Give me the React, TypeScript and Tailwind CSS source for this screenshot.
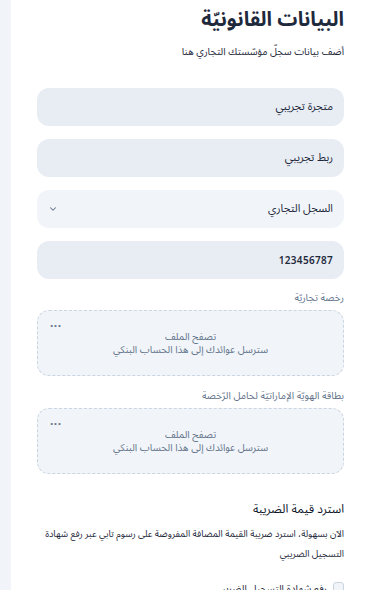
import { ChevronDown } from "lucide-react";

function TextField({ value, mono }: { value: string; mono?: boolean }) {
  return (
    <div className="flex h-[38px] items-center rounded-xl bg-[#e8edf4] px-[11px]">
      <span
        className={
          mono
            ? "font-['Noto_Sans',sans-serif] text-[10px] font-semibold tracking-[0.3px] text-[#1e293b]"
            : "text-[11px] text-[#1e293b]"
        }>
        {value}
      </span>
    </div>
  );
}

function DropZone({ label }: { label: string }) {
  return (
    <div className="flex flex-col gap-[5px]">
      <span className="text-[10px] leading-[14px] text-[#64748b]">{label}</span>
      <div className="relative flex h-[66px] flex-col items-center justify-center rounded-xl border border-dashed border-[#cbd5e1] bg-[#f1f5f9] text-[10px] leading-[13.5px] text-[#64748b]">
        <span className="absolute left-[12px] top-[6px] font-['Noto_Sans',sans-serif] text-[12px] font-bold leading-none tracking-[0.5px] text-[#64748b]">
          ...
        </span>
        <span>تصفح الملف</span>
        <span>سترسل عوائدك إلى هذا الحساب البنكي</span>
      </div>
    </div>
  );
}

export default function App() {
  return (
    <div className="flex min-h-[590px] w-full bg-white font-['Noto_Sans_Arabic','DejaVu_Sans',sans-serif]">
      <div className="w-[11px] shrink-0 bg-[#f1f5f9]" />
      <div dir="rtl" className="flex flex-1 flex-col pl-[26px] pr-[24px] pt-[4px]">
        <h1 className="text-[20px] font-bold leading-[32px] text-[#1e293b]">
          البيانات القانونيّة
        </h1>
        <p className="mt-[8px] text-[10px] leading-[16px] text-[#1e293b]">
          أضف بيانات سجلّ مؤسّستك التجاري هنا
        </p>

        <div className="mt-[28px] flex flex-col gap-[13px]">
          <TextField value="متجرة تجريبي" />
          <TextField value="ربط تجريبي" />
          <div className="flex h-[38px] items-center justify-between rounded-xl bg-[#f1f5f9] px-[11px]">
            <span className="text-[11px] text-[#1e293b]">السجل التجاري</span>
            <ChevronDown className="h-[10px] w-[10px] text-[#64748b]" strokeWidth={2.5} />
          </div>
          <TextField value="123456787" mono />
        </div>

        <div className="mt-[12px] flex flex-col gap-[13px]">
          <DropZone label="رخصة تجاريّة" />
          <DropZone label="بطاقة الهويّة الإماراتيّة لحامل الرّخصة" />
        </div>

        <h2 className="mt-[27px] text-[12px] font-normal leading-[18px] text-[#0f172a]">
          استرد قيمة الضريبة
        </h2>
        <p className="mt-[5px] text-[9.3px] leading-[20px] text-[#1e293b]">
          الآن بسهولة، استرد ضريبة القيمة المضافة المفروضة على رسوم تابي عبر رفع شهادة التسجيل الضريبي
        </p>

        <label className="mt-[18px] flex items-start gap-[6px]">
          <span className="h-[11px] w-[11px] shrink-0 rounded-[3px] border border-[#cbd5e1] bg-[#f1f5f9]" />
          <span className="text-[10px] leading-[14px] text-[#1e293b]">رفع شهادة التسجيل الضريبي</span>
        </label>
      </div>
    </div>
  );
}
